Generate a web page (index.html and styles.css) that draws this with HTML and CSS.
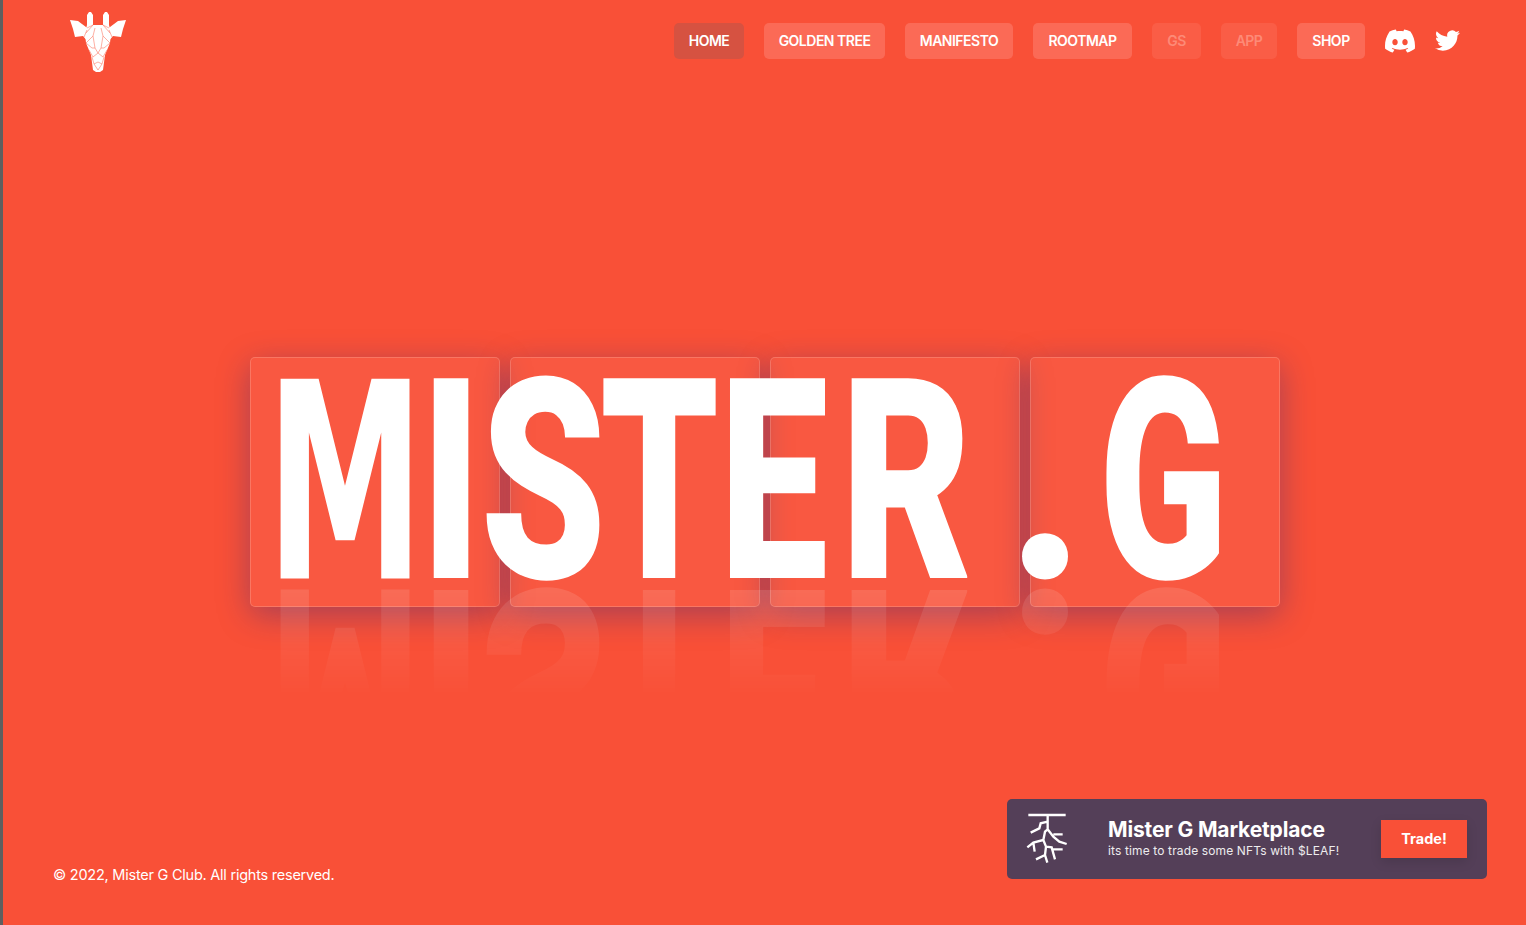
FILE: index.html
```html
<!DOCTYPE html>
<html lang="en">
<head>
<meta charset="utf-8">
<title>Mister G</title>
<link rel="stylesheet" href="styles.css">
</head>
<body>
<div class="page">
  <header class="header">
    <a class="logo" href="#" aria-label="Mister G">
      <svg class="logo-svg" viewBox="70 11 56 61">
        <g class="logo-fill">
          <path d="M87 15l2-3h2l2 3v11h-6zM103 15l2-3h2l2 3v11h-6z"/>
          <path d="M70 20l8 1 12 9-2 12-5-6-8 1-2-8zM126 20l-8 1-12 9 2 12 5-6 8 1 2-8z"/>
          <path d="M87 25h22l2 8-1 10-5 12-2 15-3 2h-4l-3-2-2-15-5-12-1-10z"/>
        </g>
        <g class="logo-lines">
          <path d="M87 28l6-3-7 8M109 28l-6-3 7 8M86 43l7-7 2-8M110 43l-7-7-2-8M93 36l2 12 3 5 3-5 2-12M86 43l6 5 3 0M110 43l-6 5-3 0M89 50l4 7 5-4 5 4 4-7M92 57l2 7 4-2 4 2 2-7M94 64l4 6 4-6M84 37l3-7M112 37l-3-7"/>
        </g>
      </svg>
    </a>
    <nav class="nav">
      <a class="nav-btn nav-active nav-home" href="#">HOME</a>
      <a class="nav-btn nav-golden" href="#">GOLDEN TREE</a>
      <a class="nav-btn nav-manifesto" href="#">MANIFESTO</a>
      <a class="nav-btn nav-rootmap" href="#">ROOTMAP</a>
      <a class="nav-btn nav-off nav-gs" href="#">GS</a>
      <a class="nav-btn nav-off nav-app" href="#">APP</a>
      <a class="nav-btn nav-shop" href="#">SHOP</a>
      <a class="social social-discord" href="#" aria-label="Discord">
        <svg viewBox="0 0 24 24" class="discord-svg"><path d="M20.317 4.3698a19.7913 19.7913 0 00-4.8851-1.5152.0741.0741 0 00-.0785.0371c-.211.3753-.4447.8648-.6083 1.2495-1.8447-.2762-3.68-.2762-5.4868 0-.1636-.3933-.4058-.8742-.6177-1.2495a.077.077 0 00-.0785-.037 19.7363 19.7363 0 00-4.8852 1.515.0699.0699 0 00-.0321.0277C.5334 9.0458-.319 13.5799.0992 18.0578a.0824.0824 0 00.0312.0561c2.0528 1.5076 4.0413 2.4228 5.9929 3.0294a.0777.0777 0 00.0842-.0276c.4616-.6304.8731-1.2952 1.226-1.9942a.076.076 0 00-.0416-.1057c-.6528-.2476-1.2743-.5495-1.8722-.8923a.077.077 0 01-.0076-.1277c.1258-.0943.2517-.1923.3718-.2914a.0743.0743 0 01.0776-.0105c3.9278 1.7933 8.18 1.7933 12.0614 0a.0739.0739 0 01.0785.0095c.1202.099.246.1981.3728.2924a.077.077 0 01-.0066.1276 12.2986 12.2986 0 01-1.873.8914.0766.0766 0 00-.0407.1067c.3604.698.7719 1.3628 1.225 1.9932a.076.076 0 00.0842.0286c1.961-.6067 3.9495-1.5219 6.0023-3.0294a.077.077 0 00.0313-.0552c.5004-5.177-.8382-9.6739-3.5485-13.6604a.061.061 0 00-.0312-.0286zM8.02 15.3312c-1.1825 0-2.1569-1.0857-2.1569-2.419 0-1.3332.9555-2.4189 2.157-2.4189 1.2108 0 2.1757 1.0952 2.1568 2.419 0 1.3332-.9555 2.4189-2.1569 2.4189zm7.9748 0c-1.1825 0-2.1569-1.0857-2.1569-2.419 0-1.3332.9554-2.4189 2.1569-2.4189 1.2108 0 2.1757 1.0952 2.1568 2.419 0 1.3332-.946 2.4189-2.1568 2.4189Z"/></svg>
      </a>
      <a class="social social-twitter" href="#" aria-label="Twitter">
        <svg viewBox="0 0 24 24" class="twitter-svg"><path d="M23.953 4.57a10 10 0 01-2.825.775 4.958 4.958 0 002.163-2.723c-.951.555-2.005.959-3.127 1.184a4.92 4.92 0 00-8.384 4.482C7.69 8.095 4.067 6.13 1.64 3.162a4.822 4.822 0 00-.666 2.475c0 1.71.87 3.213 2.188 4.096a4.904 4.904 0 01-2.228-.616v.06a4.923 4.923 0 003.946 4.827 4.996 4.996 0 01-2.212.085 4.936 4.936 0 004.604 3.417 9.867 9.867 0 01-6.102 2.105c-.39 0-.779-.023-1.17-.067a13.995 13.995 0 007.557 2.209c9.053 0 13.998-7.496 13.998-13.985 0-.21 0-.42-.015-.63A9.935 9.935 0 0024 4.59z"/></svg>
      </a>
    </nav>
  </header>

  <main class="hero">
    <h1 class="title">
      <span class="ltr ltr-m"><span class="gl">M</span></span>
      <span class="ltr ltr-i"><span class="gl">I</span></span>
      <span class="ltr ltr-s"><span class="gl">S</span></span>
      <span class="ltr ltr-t"><span class="gl">T</span></span>
      <span class="ltr ltr-e"><span class="gl">E</span></span>
      <span class="ltr ltr-r"><span class="gl">R</span></span>
      <span class="ltr ltr-dot"><span class="gl">.</span></span>
      <span class="ltr ltr-g"><span class="gl">G</span></span>
    </h1>
    <div class="cards">
      <div class="card"></div>
      <div class="card"></div>
      <div class="card"></div>
      <div class="card"></div>
    </div>
  </main>

  <footer class="footer">
    <p class="copy">© 2022, Mister G Club. All rights reserved.</p>
    <aside class="market">
      <svg class="tree" viewBox="78 66 126 153">
        <path d="M85 75H197M143 75V118L160 140L178 155L200 162M160 133H188M143 95L122 100L118 115L92 128M143 118L135 125L130 150L100 158L82 172M100 158L104 185M130 150L138 170L135 195L108 208M135 195L142 218M138 170L155 172L165 208M155 178H188"/>
      </svg>
      <div class="market-text">
        <h2 class="market-title">Mister G Marketplace</h2>
        <p class="market-sub">its time to trade some NFTs with $LEAF!</p>
      </div>
      <a class="trade" href="#">Trade!</a>
    </aside>
  </footer>
</div>
</body>
</html>
```
FILE: styles.css
```css
* { box-sizing: border-box; margin: 0; padding: 0; }
html, body { height: 100%; overflow: hidden; }
body {
  background: #f95037;
  color: #fff;
  font-family: Inter, "Open Sans", "Liberation Sans", sans-serif;
}
a { color: inherit; text-decoration: none; }
.page {
  height: 925px;
  border-left: 3px solid #5f5f5f;
  display: flex;
  flex-direction: column;
}
.header {
  display: flex;
  justify-content: space-between;
  padding: 11px 66px 0 67px;
  height: 82px;
}
.logo-svg { display: block; width: 56px; height: 61px; }
.logo-fill { fill: #fff; }
.logo-lines { fill: none; stroke: #fc7a66; stroke-width: .6; }
.nav { display: flex; gap: 20px; align-items: flex-start; padding-top: 12px; }
.nav-btn {
  height: 36px;
  padding-bottom: 1px;
  display: flex;
  align-items: center;
  justify-content: center;
  border-radius: 5px;
  background: #fb6a56;
  font-size: 14px;
  font-weight: 600;
  letter-spacing: -.5px;
  white-space: nowrap;
}
.nav-home { width: 70px; background: #d65241; }
.nav-golden { width: 121px; }
.nav-manifesto { width: 108px; }
.nav-rootmap { width: 99px; }
.nav-gs { width: 49px; }
.nav-app { width: 56px; }
.nav-shop { width: 68px; }
.nav-off { background: #fa5d46; color: #fd8a77; }
.social { display: block; }
.social svg { display: block; fill: #fff; }
.discord-svg { width: 30px; height: 30px; margin-top: 3px; }
.twitter-svg { width: 25px; height: 25px; margin-top: 5px; }

.hero {
  display: grid;
  width: 1030px;
  margin: 275px 0 0 247px;
}
.title, .cards { grid-area: 1 / 1; }
.title {
  display: flex;
  height: 227px;
  padding: 22px 0 0 30px;
  font-family: Roboto, "Liberation Sans", sans-serif;
  font-weight: 900;
  font-size: 281px;
  line-height: 207px;
  -webkit-box-reflect: below 0 linear-gradient(transparent 50%, rgba(255,255,255,.12));
}
.ltr { display: block; flex: none; height: 205px; }
.gl { display: block; transform-origin: 0 50%; white-space: pre; }
.ltr-m { width: 154px; }
.ltr-m .gl {
  font-family: "DejaVu Sans", Roboto, sans-serif;
  font-weight: 700;
  font-size: 274px;
  transform: translate(-14px, 1.6px) scaleX(.58);
}
.ltr-i { width: 53px; } .ltr-i .gl { transform: translateX(-13.5px) scaleX(.72); }
.ltr-s { width: 117px; } .ltr-s .gl { transform: translateX(-6.7px) scaleX(.716); }
.ltr-t { width: 126px; } .ltr-t .gl { transform: translateX(-4px) scaleX(.672); }
.ltr-e { width: 121px; } .ltr-e .gl { transform: translateX(-10.5px) scaleX(.689); }
.ltr-r { width: 171px; } .ltr-r .gl { transform: translateX(-10.3px) scaleX(.718); }
.ltr-dot { width: 84px; } .ltr-dot .gl { transform: translateX(-14.4px) scaleX(.9); }
.ltr-g { width: 120px; } .ltr-g .gl { transform: translateX(-7.1px) scaleX(.672); }

.cards { display: flex; gap: 10px; }
.card {
  width: 250px;
  height: 250px;
  border-radius: 5px;
  background: rgba(255,255,255,.05);
  border: 1px solid rgba(255,255,255,.18);
  box-shadow: 0 8px 32px rgba(31,38,135,.37);
}

.footer {
  margin-top: auto;
  display: flex;
  justify-content: space-between;
  align-items: flex-end;
  padding: 0 39px 46px 50px;
}
.copy { font-size: 14.5px; letter-spacing: -.24px; line-height: 22px; margin-bottom: -7px; white-space: nowrap; }
.market {
  width: 480px;
  height: 80px;
  border-radius: 5px;
  background: #543f58;
  display: flex;
  align-items: center;
  padding: 0 20px 0 19px;
}
.tree {
  width: 42px;
  height: 51px;
  fill: none;
  stroke: #fff;
  stroke-width: 7;
  flex: none;
  margin-top: -3px;
}
.market-text { margin: -2px 0 0 40px; flex: 1; }
.market-title { font-size: 21px; line-height: 26px; font-weight: 700; letter-spacing: -.15px; }
.market-sub { font-size: 12px; line-height: 16px; letter-spacing: .13px; opacity: .9; }
.trade {
  width: 86px;
  height: 38px;
  padding-bottom: 1px;
  background: #f95037;
  display: flex;
  align-items: center;
  justify-content: center;
  font-size: 14.5px;
  font-weight: 700;
  box-shadow: 0 4px 12px rgba(0,0,0,.12);
}
```
